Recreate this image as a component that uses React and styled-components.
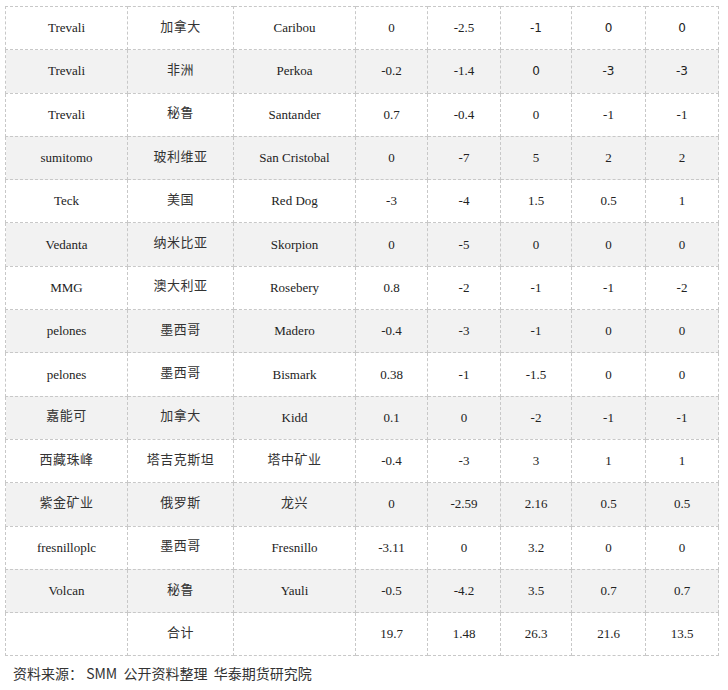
import React from "react";
import styled, { createGlobalStyle } from "styled-components";

const Global = createGlobalStyle`
  html, body { margin: 0; padding: 0; background: #fff; }
  body { font-family: "Liberation Serif", "Noto Sans CJK SC", serif; color: #222; }
`;

const Page = styled.div`
  padding: 6px 10px 0 5px;
`;

const Table = styled.table`
  border-collapse: collapse;
  width: 713px;
  table-layout: fixed;
  border: 1px dashed #c8c8c8;
`;

const Row = styled.tr`
  height: 43.3px;
  background: ${(p) => (p.$shaded ? "#f2f2f2" : "#ffffff")};
`;

const Cell = styled.td`
  border: 1px dashed #c8c8c8;
  padding: 0;
  text-align: center;
  vertical-align: middle;
  font-size: 13px;
  color: #222;
  font-family: ${(p) =>
    p.$sans
      ? '"DejaVu Sans", "Liberation Sans", sans-serif'
      : '"Liberation Serif", "Noto Sans CJK SC", serif'};
  ${(p) => (p.$sans ? "font-size: 12px;" : "")}
`;

const Zh = styled.span`
  font-family: "Noto Sans CJK SC", sans-serif;
  font-size: 13px;
  color: #333;
  letter-spacing: 0.5px;
  position: relative;
  top: -3px;
`;

const Source = styled.div`
  margin-top: 7px;
  padding-left: 8px;
  font-family: "Noto Sans CJK SC", sans-serif;
  font-size: 14px;
  line-height: 20px;
  color: #333;
`;

const widths = [122, 106, 122, 72, 73, 71, 74, 73];

const rows = [
  ["Trevali", "加拿大", "Caribou", "0", "-2.5", "-1", "0", "0"],
  ["Trevali", "非洲", "Perkoa", "-0.2", "-1.4", "0", "-3", "-3"],
  ["Trevali", "秘鲁", "Santander", "0.7", "-0.4", "0", "-1", "-1"],
  ["sumitomo", "玻利维亚", "San Cristobal", "0", "-7", "5", "2", "2"],
  ["Teck", "美国", "Red Dog", "-3", "-4", "1.5", "0.5", "1"],
  ["Vedanta", "纳米比亚", "Skorpion", "0", "-5", "0", "0", "0"],
  ["MMG", "澳大利亚", "Rosebery", "0.8", "-2", "-1", "-1", "-2"],
  ["pelones", "墨西哥", "Madero", "-0.4", "-3", "-1", "0", "0"],
  ["pelones", "墨西哥", "Bismark", "0.38", "-1", "-1.5", "0", "0"],
  ["嘉能可", "加拿大", "Kidd", "0.1", "0", "-2", "-1", "-1"],
  ["西藏珠峰", "塔吉克斯坦", "塔中矿业", "-0.4", "-3", "3", "1", "1"],
  ["紫金矿业", "俄罗斯", "龙兴", "0", "-2.59", "2.16", "0.5", "0.5"],
  ["fresnilloplc", "墨西哥", "Fresnillo", "-3.11", "0", "3.2", "0", "0"],
  ["Volcan", "秘鲁", "Yauli", "-0.5", "-4.2", "3.5", "0.7", "0.7"],
  ["", "合计", "", "19.7", "1.48", "26.3", "21.6", "13.5"],
];

const isZh = (s) => /[\u4e00-\u9fff]/.test(s);

export default function App() {
  return (
    <>
      <Global />
      <Page>
        <Table>
          <colgroup>
            {widths.map((w, i) => (
              <col key={i} style={{ width: w }} />
            ))}
          </colgroup>
          <tbody>
            {rows.map((r, ri) => (
              <Row key={ri} $shaded={ri % 2 === 1}>
                {r.map((c, ci) => (
                  <Cell key={ci} $sans={ri < 2 && ci >= 5}>
                    {isZh(c) ? <Zh>{c}</Zh> : c}
                  </Cell>
                ))}
              </Row>
            ))}
          </tbody>
        </Table>
        <Source>资料来源：&nbsp;SMM&nbsp; 公开资料整理&nbsp; 华泰期货研究院</Source>
      </Page>
    </>
  );
}
